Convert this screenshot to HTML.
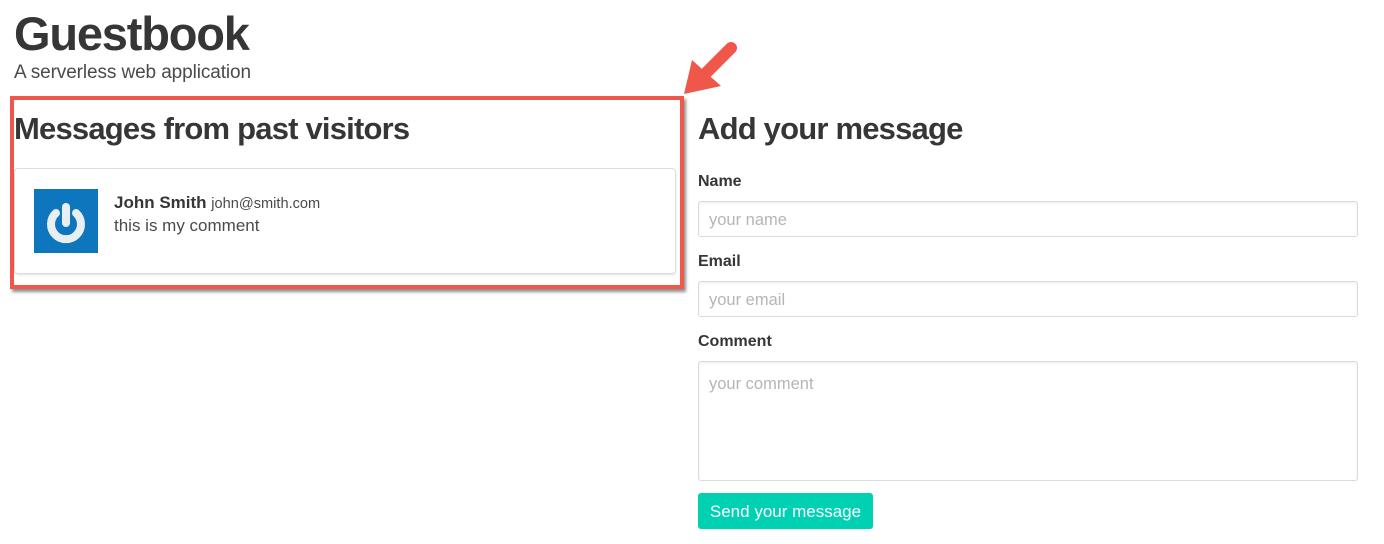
<!DOCTYPE html>
<html><head><style>
body{margin:0;width:1384px;height:544px;background:#fff;font-family:"Liberation Sans",sans-serif;color:#363636;position:relative;overflow:hidden}
.a{position:absolute}
h1{position:absolute;left:14px;top:6px;margin:0;font-size:47px;font-weight:600;letter-spacing:-1.2px}
.sub{left:14px;top:62px;font-size:19px;color:#4a4a4a;letter-spacing:-0.1px}
h2{position:absolute;margin:0;font-size:31px;font-weight:600;letter-spacing:-0.8px}
.box{left:10px;top:96px;width:666px;height:185px;border:4px solid #f0574a;box-shadow:2px 3px 3px rgba(0,0,0,.45)}
.card{left:14px;top:168px;width:660px;height:104px;border:1px solid #ddd;border-radius:4px;box-shadow:0 1px 2px rgba(0,0,0,.12)}
.lbl{font-size:16px;font-weight:bold;color:#363636;left:698px}
.in{left:698px;width:660px;border:1px solid #dbdbdb;border-radius:3px;box-shadow:inset 0 1px 2px rgba(0,0,0,.08);color:#b5b5b5;font-size:16.5px;box-sizing:border-box;padding-left:10px}
</style></head><body>
<h1>Guestbook</h1>
<div class="a sub">A serverless web application</div>
<div class="a box"></div>
<h2 style="left:14px;top:111px">Messages from past visitors</h2>
<div class="a card"></div>
<div class="a" style="left:34px;top:189px;width:64px;height:64px;background:#0e76bd">
<svg width="64" height="64"><path d="M22 24 A15 15 0 1 0 42 24" fill="none" stroke="#e8eef2" stroke-width="8" stroke-linecap="round"/><line x1="32" y1="18" x2="32" y2="34" stroke="#e8eef2" stroke-width="8" stroke-linecap="round"/></svg></div>
<div class="a" style="left:114px;top:193px;font-size:17px"><b>John Smith</b> <span style="font-size:14.6px;color:#4a4a4a">john@smith.com</span></div>
<div class="a" style="left:114px;top:216px;font-size:17px;color:#4a4a4a">this is my comment</div>
<svg class="a" style="left:0;top:0" width="1384" height="544"><line x1="731" y1="48" x2="705" y2="74" stroke="#f0574a" stroke-width="12" stroke-linecap="round"/><polygon points="684,94 692,60 721,86" fill="#f0574a"/></svg>
<h2 style="left:698px;top:111px">Add your message</h2>
<div class="a lbl" style="top:173px">Name</div>
<div class="a in" style="top:201px;height:36px;line-height:36px">your name</div>
<div class="a lbl" style="top:253px">Email</div>
<div class="a in" style="top:281px;height:36px;line-height:36px">your email</div>
<div class="a lbl" style="top:333px">Comment</div>
<div class="a in" style="top:361px;height:120px;padding-top:13px">your comment</div>
<div class="a" style="left:698px;top:493px;width:175px;height:36px;background:#00d1b2;border-radius:3px;color:#fff;font-size:17px;line-height:37px;text-align:center">Send your message</div>
</body></html>
